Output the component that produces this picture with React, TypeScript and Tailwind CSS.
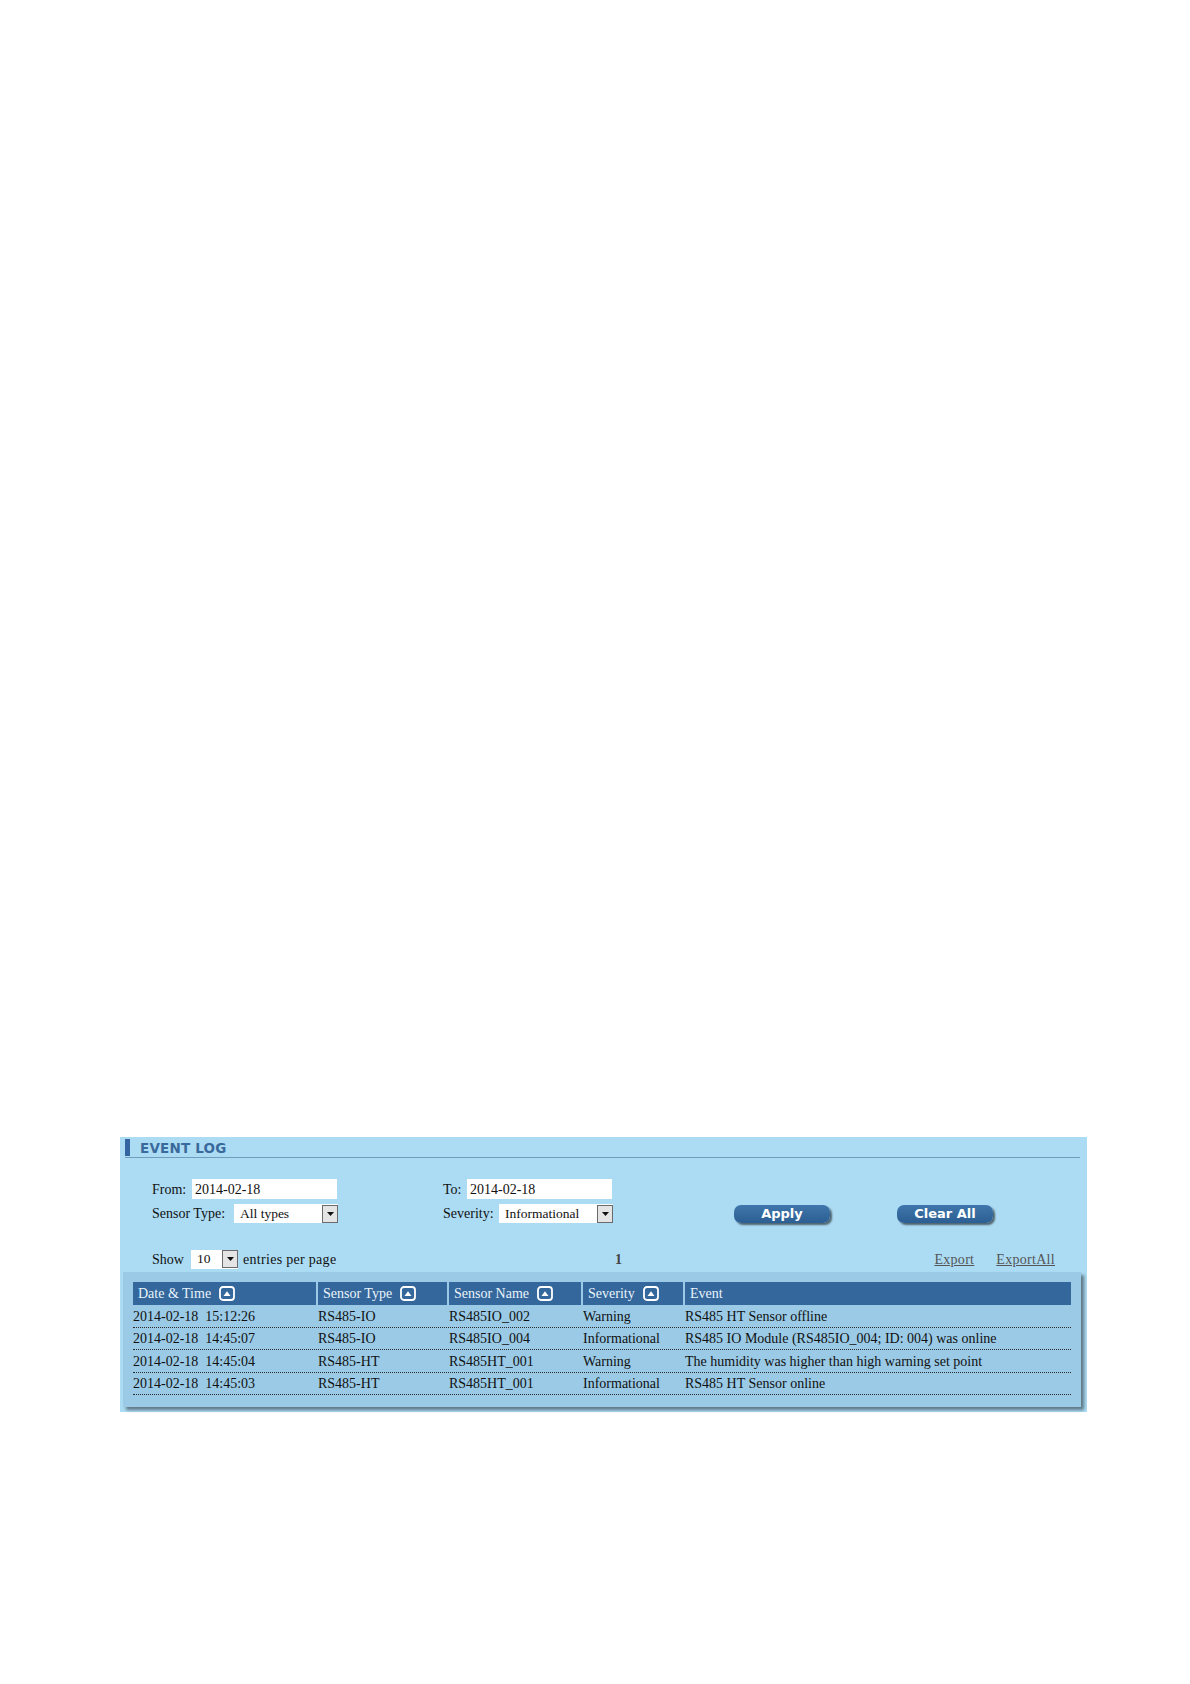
const ROWS = [
  ['2014-02-18  15:12:26', 'RS485-IO', 'RS485IO_002', 'Warning', 'RS485 HT Sensor offline'],
  ['2014-02-18  14:45:07', 'RS485-IO', 'RS485IO_004', 'Informational', 'RS485 IO Module (RS485IO_004; ID: 004) was online'],
  ['2014-02-18  14:45:04', 'RS485-HT', 'RS485HT_001', 'Warning', 'The humidity was higher than high warning set point'],
  ['2014-02-18  14:45:03', 'RS485-HT', 'RS485HT_001', 'Informational', 'RS485 HT Sensor online'],
]

const COLS = [
  { label: 'Date & Time', w: 'w-[183px]', sort: true },
  { label: 'Sensor Type', w: 'w-[129px]', sort: true },
  { label: 'Sensor Name', w: 'w-[132px]', sort: true },
  { label: 'Severity', w: 'w-[100px]', sort: true },
  { label: 'Event', w: 'flex-1', sort: false },
]

function SortIcon() {
  return (
    <svg width="16" height="15" viewBox="0 0 16 15" className="ml-[8px] shrink-0">
      <rect x="1" y="1" width="14" height="13" rx="3" fill="none" stroke="#ffffff" strokeWidth="1.8" />
      <path d="M4.5 10 L8 5.2 L11.5 10 Z" fill="#ffffff" />
    </svg>
  )
}

function Arrow() {
  return (
    <span className="flex h-[18px] w-[16px] shrink-0 items-center justify-center border border-[#6b6b6b] bg-[#e4e4e4]">
      <svg width="7" height="4" viewBox="0 0 7 4">
        <path d="M0 0 L7 0 L3.5 4 Z" fill="#111" />
      </svg>
    </span>
  )
}

function Select({ value, width }: { value: string; width: string }) {
  return (
    <span className={`flex h-[19px] items-center bg-white pl-[6px] ${width}`}>
      <span className="flex-1 text-[13.5px] leading-none text-[#111]">{value}</span>
      <Arrow />
    </span>
  )
}

function Btn({ label }: { label: string }) {
  return (
    <button
      type="button"
      className="h-[18px] w-[96px] rounded-[7px] bg-gradient-to-b from-[#3f76ab] to-[#2c5f93] text-[13px] font-bold leading-none text-white shadow-[2px_2px_2px_rgba(0,0,0,0.55)]"
      style={{ fontFamily: '"DejaVu Sans", Verdana, sans-serif' }}
    >
      {label}
    </button>
  )
}

export default function App() {
  return (
    <div className="min-h-[1684px] w-[1190px] bg-white pl-[120px] pt-[1137px]" style={{ fontFamily: '"Liberation Serif", "Times New Roman", serif' }}>
      <div className="h-[275px] w-[967px] bg-[#acdcf4] text-[14px] text-[#111]">
        {/* title */}
        <div className="ml-[5px] mr-[7px] flex h-[21px] items-end border-b border-[#6f9cbb]">
          <span className="mb-px h-[17px] w-[5px] bg-[#3465a0]" />
          <span
            className="mb-[2px] ml-[10px] text-[13.5px] font-bold leading-none tracking-[0.2px] text-[#3a6a9c]"
            style={{ fontFamily: '"DejaVu Sans", Verdana, sans-serif' }}
          >
            EVENT LOG
          </span>
        </div>

        {/* filters */}
        <div className="mt-[21px] pl-[32px]">
          <div className="flex h-[20px] items-center">
            <div className="flex w-[291px] items-center">
              <span className="w-[40px]">From:</span>
              <span className="flex h-[20px] w-[145px] items-center bg-white pl-[3px]">2014-02-18</span>
            </div>
            <div className="flex items-center">
              <span className="w-[24px]">To:</span>
              <span className="flex h-[20px] w-[145px] items-center bg-white pl-[3px]">2014-02-18</span>
            </div>
          </div>
          <div className="mt-[5px] flex h-[19px] items-center">
            <div className="flex w-[291px] items-center">
              <span className="w-[82px]">Sensor Type:</span>
              <Select value="All types" width="w-[104px]" />
            </div>
            <div className="flex w-[291px] items-center">
              <span className="w-[56px]">Severity:</span>
              <Select value="Informational" width="w-[114px]" />
            </div>
            <div className="flex items-center gap-[67px]">
              <Btn label="Apply" />
              <Btn label="Clear All" />
            </div>
          </div>
          <div className="mt-[26px] flex h-[20px] items-center pr-[32px]">
            <div className="flex w-[463px] items-center">
              <span className="w-[39px]">Show</span>
              <span className="flex h-[19px] w-[47px] items-center bg-white pl-[6px]">
                <span className="flex-1 text-[13.5px] leading-none">10</span>
                <Arrow />
              </span>
              <span className="ml-[5px] tracking-[0.3px]">entries per page</span>
            </div>
            <span className="font-bold text-[#444]">1</span>
            <div className="ml-auto flex items-center gap-[22px] tracking-[0.3px] text-[#555]">
              <span className="underline">Export</span>
              <span className="underline">ExportAll</span>
            </div>
          </div>
        </div>

        {/* table */}
        <div className="ml-[3px] mt-[3px] w-[958px] bg-[#9acae6] px-[10px] pb-[12px] pt-[10px] shadow-[3px_3px_3px_rgba(0,0,0,0.45)]">
          <div className="flex h-[23px] gap-[2px]">
            {COLS.map(c => (
              <div key={c.label} className={`flex items-center bg-[#34679b] pl-[5px] text-[#eaf3fb] ${c.w}`}>
                <span>{c.label}</span>
                {c.sort && <SortIcon />}
              </div>
            ))}
          </div>
          {ROWS.map(r => (
            <div key={r[0]} className="flex h-[22.5px] items-end gap-[2px] border-b border-dotted border-[#2a2a2a] pb-[1px]">
              {r.map((v, i) => (
                <div key={i} className={`whitespace-pre leading-[18px] ${COLS[i].w}`}>
                  {v}
                </div>
              ))}
            </div>
          ))}
        </div>
      </div>
    </div>
  )
}
